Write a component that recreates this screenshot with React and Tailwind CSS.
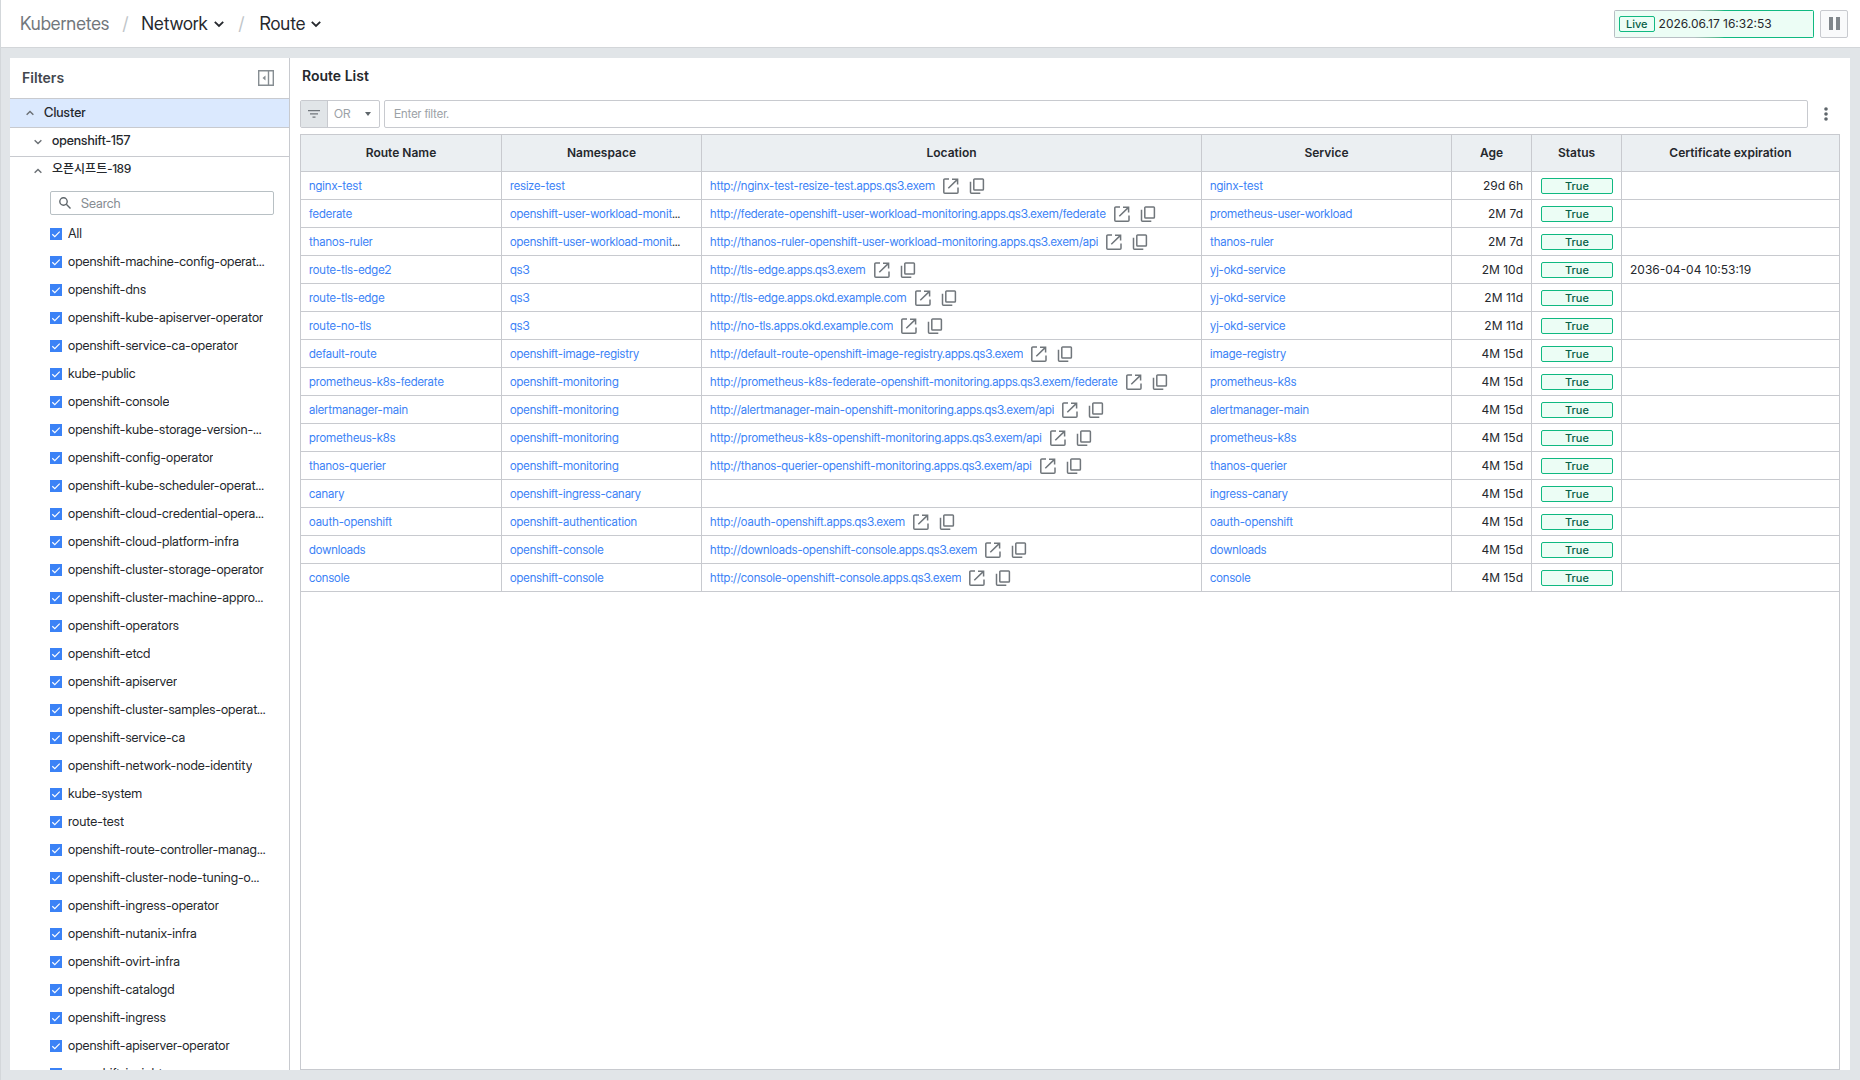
import React, { useState } from 'react';

const NAMESPACES = [
  'openshift-machine-config-operator',
  'openshift-dns',
  'openshift-kube-apiserver-operator',
  'openshift-service-ca-operator',
  'kube-public',
  'openshift-console',
  'openshift-kube-storage-version-migrator',
  'openshift-config-operator',
  'openshift-kube-scheduler-operator',
  'openshift-cloud-credential-operator',
  'openshift-cloud-platform-infra',
  'openshift-cluster-storage-operator',
  'openshift-cluster-machine-approver',
  'openshift-operators',
  'openshift-etcd',
  'openshift-apiserver',
  'openshift-cluster-samples-operator',
  'openshift-service-ca',
  'openshift-network-node-identity',
  'kube-system',
  'route-test',
  'openshift-route-controller-manager',
  'openshift-cluster-node-tuning-operator',
  'openshift-ingress-operator',
  'openshift-nutanix-infra',
  'openshift-ovirt-infra',
  'openshift-catalogd',
  'openshift-ingress',
  'openshift-apiserver-operator',
  'openshift-insights',
];

const UWM = 'openshift-user-workload-monitoring';

const ROUTES = [
  { name: 'nginx-test', ns: 'resize-test', url: 'http://nginx-test-resize-test.apps.qs3.exem', service: 'nginx-test', age: '29d 6h' },
  { name: 'federate', ns: UWM, url: 'http://federate-openshift-user-workload-monitoring.apps.qs3.exem/federate', service: 'prometheus-user-workload', age: '2M 7d' },
  { name: 'thanos-ruler', ns: UWM, url: 'http://thanos-ruler-openshift-user-workload-monitoring.apps.qs3.exem/api', service: 'thanos-ruler', age: '2M 7d' },
  { name: 'route-tls-edge2', ns: 'qs3', url: 'http://tls-edge.apps.qs3.exem', service: 'yj-okd-service', age: '2M 10d', cert: '2036-04-04 10:53:19' },
  { name: 'route-tls-edge', ns: 'qs3', url: 'http://tls-edge.apps.okd.example.com', service: 'yj-okd-service', age: '2M 11d' },
  { name: 'route-no-tls', ns: 'qs3', url: 'http://no-tls.apps.okd.example.com', service: 'yj-okd-service', age: '2M 11d' },
  { name: 'default-route', ns: 'openshift-image-registry', url: 'http://default-route-openshift-image-registry.apps.qs3.exem', service: 'image-registry', age: '4M 15d' },
  { name: 'prometheus-k8s-federate', ns: 'openshift-monitoring', url: 'http://prometheus-k8s-federate-openshift-monitoring.apps.qs3.exem/federate', service: 'prometheus-k8s', age: '4M 15d' },
  { name: 'alertmanager-main', ns: 'openshift-monitoring', url: 'http://alertmanager-main-openshift-monitoring.apps.qs3.exem/api', service: 'alertmanager-main', age: '4M 15d' },
  { name: 'prometheus-k8s', ns: 'openshift-monitoring', url: 'http://prometheus-k8s-openshift-monitoring.apps.qs3.exem/api', service: 'prometheus-k8s', age: '4M 15d' },
  { name: 'thanos-querier', ns: 'openshift-monitoring', url: 'http://thanos-querier-openshift-monitoring.apps.qs3.exem/api', service: 'thanos-querier', age: '4M 15d' },
  { name: 'canary', ns: 'openshift-ingress-canary', url: '', service: 'ingress-canary', age: '4M 15d' },
  { name: 'oauth-openshift', ns: 'openshift-authentication', url: 'http://oauth-openshift.apps.qs3.exem', service: 'oauth-openshift', age: '4M 15d' },
  { name: 'downloads', ns: 'openshift-console', url: 'http://downloads-openshift-console.apps.qs3.exem', service: 'downloads', age: '4M 15d' },
  { name: 'console', ns: 'openshift-console', url: 'http://console-openshift-console.apps.qs3.exem', service: 'console', age: '4M 15d' },
];

const Chevron = ({ up, className }) => (
  <svg viewBox="0 0 10 10" className={className} fill="none" stroke="currentColor" strokeWidth="1.8">
    <path d={up ? 'M0.8 7.2L5 3l4.2 4.2' : 'M0.8 2.8L5 7l4.2-4.2'} />
  </svg>
);

const OpenIcon = () => (
  <svg viewBox="0 0 16 16" className="w-4 h-4" fill="none" stroke="currentColor" strokeWidth="1.5">
    <path d="M6 1H1.8a1 1 0 0 0-1 1v12.2a1 1 0 0 0 1 1H14a1 1 0 0 0 1-1V9.5" />
    <path d="M5.3 10.2L14.2 1.6M9 1.2h5.6v5.3" />
  </svg>
);

const CopyIcon = () => (
  <svg viewBox="0 0 16 16" className="w-4 h-4" fill="none" stroke="currentColor" strokeWidth="1.5">
    <rect x="4.8" y="1" width="9.6" height="11" rx="0.8" />
    <path d="M1.5 3.8v10.4a1 1 0 0 0 1 1h8.8" />
  </svg>
);

const CheckItem = ({ label, checked, onChange }) => (
  <label className="flex items-center gap-1.5 h-7 pr-2">
    <span className="relative w-3 h-3 shrink-0">
      <input type="checkbox" checked={checked} onChange={onChange} className="peer block w-3 h-3 appearance-none border border-[#b8bfc4] bg-white checked:border-[#3b82f6] checked:bg-[#3b82f6]" />
      <svg viewBox="0 0 12 12" className="absolute inset-0 w-3 h-3 pointer-events-none hidden peer-checked:block" fill="none" stroke="#fff" strokeWidth="1.2">
        <path d="M2.3 6.2l2.5 2.4 4.9-4.9" />
      </svg>
    </span>
    <span className="pb-0.5 truncate">{label}</span>
  </label>
);

const Sidebar = () => {
  const [unchecked, setUnchecked] = useState([]);
  const allChecked = unchecked.length === 0;

  const toggle = (ns) => {
    setUnchecked(unchecked.includes(ns) ? unchecked.filter(n => n !== ns) : [...unchecked, ns]);
  };

  return (
    <aside className="w-[280px] shrink-0 flex flex-col bg-white border-r border-[#c8cacf] text-[13px] leading-5">
      <div className="h-[41px] shrink-0 flex items-center justify-between pl-3 pr-[15px] border-b border-[#c8cacf]">
        <h2 className="font-['Inter',sans-serif] text-[14px] font-semibold text-[#43474e]">Filters</h2>
        <button type="button" aria-label="Collapse filters" className="text-[#868d92]">
          <svg viewBox="0 0 16 16" className="w-4 h-4" fill="none" stroke="currentColor">
            <path d="M0.7 0.7h14.6v14.6H0.7zM10.5 0.5v15" strokeWidth="1.4" />
            <path d="M7.5 5.5v5L4.5 8z" fill="currentColor" stroke="none" />
          </svg>
        </button>
      </div>

      <button type="button" className="h-[29px] shrink-0 flex items-center gap-2.5 pl-4 border-b border-[#c8cacf] bg-[#dbe9fe] font-medium">
        <Chevron up className="w-2 h-2 text-[#6b7075]" />
        <span className="pb-0.5">Cluster</span>
      </button>
      <button type="button" className="h-[29px] shrink-0 flex items-center gap-2.5 pl-6 border-b border-[#c8cacf] font-medium">
        <Chevron className="w-2 h-2 text-[#6b7075]" />
        <span className="pb-1">openshift-157</span>
      </button>
      <button type="button" className="h-7 shrink-0 flex items-center gap-2.5 pl-6 text-[12px] font-medium">
        <Chevron up className="w-2 h-2 text-[#6b7075]" />
        <span className="pb-1">오픈시프트-189</span>
      </button>

      <div className="flex-1 min-h-0 overflow-hidden pl-10 pr-[15px] pt-1.5">
        <div className="h-6 mb-[5px] flex items-center gap-2.5 pl-2 border border-[#b8c0c4] rounded-xs">
          <svg viewBox="0 0 12 12" className="w-3 h-3 shrink-0 text-[#5f666b]" fill="none" stroke="currentColor" strokeWidth="1.4">
            <circle cx="4.5" cy="4.5" r="3.7" />
            <path d="M7.3 7.3l4.2 4.2" />
          </svg>
          <input type="text" aria-label="Search" placeholder="Search" className="w-full min-w-0 outline-none placeholder:text-[#868c92]" />
        </div>
        <CheckItem label="All" checked={allChecked} onChange={() => setUnchecked(allChecked ? NAMESPACES : [])} />
        {NAMESPACES.map(ns => (
          <CheckItem key={ns} label={ns} checked={!unchecked.includes(ns)} onChange={() => toggle(ns)} />
        ))}
      </div>
    </aside>
  );
};

const RouteTable = () => (
  <table className="w-full table-fixed border-separate border-spacing-0 text-[12px] leading-4">
    <colgroup>
      <col className="w-[201px]" />
      <col className="w-[200px]" />
      <col className="w-[500px]" />
      <col className="w-[250px]" />
      <col className="w-[80px]" />
      <col className="w-[90px]" />
      <col />
    </colgroup>
    <thead>
      <tr className="h-[37px] bg-[#ebeff2] font-['Inter',sans-serif]">
        {['Route Name', 'Namespace', 'Location', 'Service', 'Age', 'Status', 'Certificate expiration'].map(h => (
          <th key={h} scope="col" className="p-0 font-semibold border-b border-r last:border-r-0 border-[#c8cacf]">{h}</th>
        ))}
      </tr>
    </thead>
    <tbody>
      {ROUTES.map(r => (
        <tr key={r.name} className="h-7 [&>td]:border-b [&>td]:border-r [&>td:last-child]:border-r-0 [&>td]:border-[#c8cacf] [&>td]:py-0">
          <td className="pl-2 pr-4 truncate"><a href="#route" className="text-[#3b82f6]">{r.name}</a></td>
          <td className="pl-2 pr-5 truncate"><a href="#namespace" className="text-[#3b82f6]">{r.ns}</a></td>
          <td className="px-2">
            {r.url && (
              <div className="flex items-center text-[#70767b]">
                <a href={r.url} className="text-[#3b82f6] truncate">{r.url}</a>
                <button type="button" aria-label="Open in new tab" className="ml-2 shrink-0"><OpenIcon /></button>
                <button type="button" aria-label="Copy address" className="ml-2.5 shrink-0"><CopyIcon /></button>
              </div>
            )}
          </td>
          <td className="px-2 truncate"><a href="#service" className="text-[#3b82f6]">{r.service}</a></td>
          <td className="px-2 text-right font-['Inter',sans-serif]">{r.age}</td>
          <td className="pl-[9px] pr-2">
            <span className="block h-4 leading-[14px] text-[11px] font-medium text-center text-[#065f46] bg-[#ecfdf5] border border-[#10b981] rounded-xs font-['Inter',sans-serif]">True</span>
          </td>
          <td className="px-2 font-['Inter',sans-serif]">{r.cert}</td>
        </tr>
      ))}
    </tbody>
  </table>
);

const App = () => {
  const [operator, setOperator] = useState('OR');
  const [filter, setFilter] = useState('');

  return (
    <div className="h-screen flex flex-col bg-[#e1e5e8] text-[#25282d] border-l border-[#d3d7da] font-['Inter_Display','Inter','Noto_Sans_CJK_KR',sans-serif]">
      {/* Top bar */}
      <header className="h-12 shrink-0 flex items-center justify-between pl-[19px] pr-3 bg-white border-b border-[#d3d6d9]">
        <nav className="flex items-center text-[18px] leading-6">
          <a href="#kubernetes" className="text-[#72777c]">Kubernetes</a>
          <span className="mx-[13px] text-[#c0c5c9]">/</span>
          <button type="button" className="flex items-center gap-1.5">
            Network <Chevron className="w-2.5 h-2.5" />
          </button>
          <span className="mx-[15px] text-[#c0c5c9]">/</span>
          <button type="button" className="flex items-center gap-1.5">
            Route <Chevron className="w-2.5 h-2.5" />
          </button>
        </nav>
        <div className="flex items-center gap-1.5 font-['Inter',sans-serif]">
          <div className="w-[200px] h-7 p-px rounded-xs bg-linear-to-r from-[#b8bfc4] from-40% to-[#10b981] to-55%">
            <div className="h-full flex items-center gap-1 pl-1 bg-[#ecfdf5]">
              <span className="h-4 px-1.5 leading-[14px] text-[11px] font-medium text-[#065f46] border border-[#10b981] rounded-xs">Live</span>
              <time className="text-[12px] leading-4">2026.06.17 16:32:53</time>
            </div>
          </div>
          <button type="button" aria-label="Pause" className="w-7 h-7 flex items-center justify-center gap-[3px] bg-[#f9fafb] border border-[#c8cacf] rounded-xs">
            <span className="w-1 h-[13px] bg-[#80868b]"></span>
            <span className="w-1 h-[13px] bg-[#80868b]"></span>
          </button>
        </div>
      </header>

      <div className="flex-1 min-h-0 flex pt-2.5 pb-2.5 pl-[9px] pr-2.5">
        <Sidebar />

        {/* Route list */}
        <main className="flex-1 min-w-0 flex flex-col bg-white px-2.5">
          <h1 className="h-[42px] shrink-0 pt-2 px-0.5 font-['Inter',sans-serif] text-[14px] leading-5 font-semibold">Route List</h1>
          <div className="flex items-center gap-1 mb-1.5">
            <div className="w-20 h-7 shrink-0 flex border border-[#c8cacf] rounded-xs">
              <button type="button" aria-label="Filter options" className="w-[27px] flex items-center justify-center bg-[#e1e5e8] border-r border-[#c8cacf] text-[#70767b]">
                <svg viewBox="0 0 12 8" className="w-3 h-2" fill="currentColor">
                  <path d="M0 0h12v1.2H0zM2 3.3h8v1.2H2zM4.5 6.6h3v1.2h-3z" />
                </svg>
              </button>
              <div className="relative flex-1 flex items-center">
                <select aria-label="Operator" value={operator} onChange={e => setOperator(e.target.value)} className="w-full h-full pl-1.5 appearance-none outline-none text-[12px] text-[#9ba1a6]">
                  <option>OR</option>
                  <option>AND</option>
                </select>
                <svg viewBox="0 0 6 4" className="absolute right-2 w-1.5 h-1 pointer-events-none text-[#5f666b]" fill="currentColor">
                  <path d="M0 0h6L3 4z" />
                </svg>
              </div>
            </div>
            <input type="text" aria-label="Filter" value={filter} onChange={e => setFilter(e.target.value)} placeholder="Enter filter." className="flex-1 min-w-0 h-7 px-[9px] pb-0.5 text-[12px] border border-[#c8cacf] rounded-xs outline-none placeholder:text-[#9ba1a6]" />
            <button type="button" aria-label="More" className="w-7 h-7 shrink-0 flex items-center justify-center text-[#5f666b]">
              <svg viewBox="0 0 4 14" className="w-1 h-3.5" fill="currentColor">
                <circle cx="2" cy="2" r="1.8" />
                <circle cx="2" cy="7" r="1.8" />
                <circle cx="2" cy="12" r="1.8" />
              </svg>
            </button>
          </div>
          <div className="flex-1 min-h-0 overflow-hidden border border-[#c8cacf]">
            <RouteTable />
          </div>
        </main>
      </div>
    </div>
  );
};

export default App;
